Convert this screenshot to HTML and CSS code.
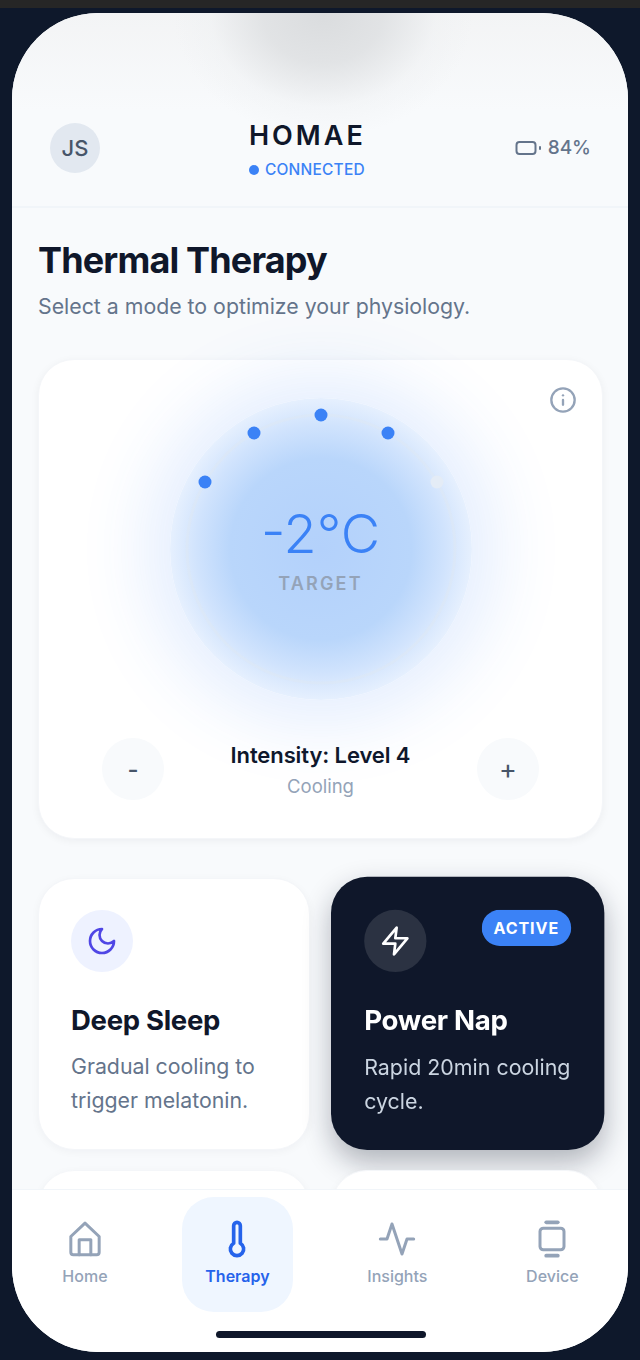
FILE: index.html
```html
<!DOCTYPE html>
<html lang="en">
<head>
  <meta charset="UTF-8" />
  <meta name="viewport" content="width=device-width, initial-scale=1.0" />
  <title>Homae | Thermal Therapy</title>
  <link rel="stylesheet" href="styles.css">
</head>
<body>
  <div class="top-strip"></div>
  <div class="phone">
    <header class="app-header">
      <div class="avatar">JS</div>
      <div class="brand">
        <div class="brand-name">HOMAE</div>
        <div class="brand-status"><span class="status-dot"></span>CONNECTED</div>
      </div>
      <div class="battery">
        <svg class="battery-icon" viewBox="0 0 26 16" fill="none" stroke="currentColor" stroke-width="2" stroke-linecap="round"><rect x="1" y="2" width="19" height="12" rx="3"></rect><path d="M24.5 7v2"></path></svg>
        84%
      </div>
    </header>

    <main class="content">
      <h1>Thermal Therapy</h1>
      <p class="subtitle">Select a mode to optimize your physiology.</p>

      <section class="hero-card">
        <svg class="info-icon" viewBox="0 0 24 24" fill="none" stroke="currentColor" stroke-width="2" stroke-linecap="round"><circle cx="12" cy="12" r="10"></circle><path d="M12 16v-4"></path><path d="M12 8h.01"></path></svg>
        <div class="dial">
          <svg class="dial-marks" viewBox="0 0 302 302">
            <circle class="track" cx="151" cy="151" r="134"></circle>
            <circle class="mark" cx="35" cy="84" r="6.5"></circle>
            <circle class="mark" cx="84" cy="35" r="6.5"></circle>
            <circle class="mark" cx="151" cy="17" r="6.5"></circle>
            <circle class="mark" cx="218" cy="35" r="6.5"></circle>
            <circle class="mark off" cx="267" cy="84" r="6.5"></circle>
          </svg>
          <div class="temp">-2°C</div>
          <div class="temp-label">TARGET</div>
        </div>
        <div class="controls">
          <button class="round-btn">-</button>
          <div class="level">
            <div class="level-name">Intensity: Level 4</div>
            <div class="level-sub">Cooling</div>
          </div>
          <button class="round-btn plus">+</button>
        </div>
      </section>

      <section class="modes">
        <div class="mode-card">
          <div class="mode-icon moon">
            <svg viewBox="0 0 24 24" fill="none" stroke="currentColor" stroke-width="2" stroke-linecap="round" stroke-linejoin="round"><path d="M12 3a6 6 0 0 0 9 9 9 9 0 1 1-9-9Z"></path></svg>
          </div>
          <h2>Deep Sleep</h2>
          <p>Gradual cooling to trigger melatonin.</p>
        </div>
        <div class="mode-card active">
          <span class="badge">ACTIVE</span>
          <div class="mode-icon zap">
            <svg viewBox="0 0 24 24" fill="none" stroke="currentColor" stroke-width="2" stroke-linecap="round" stroke-linejoin="round"><path d="M13 2 3 14h9l-1 8 10-12h-9l1-8z"></path></svg>
          </div>
          <h2>Power Nap</h2>
          <p>Rapid 20min cooling cycle.</p>
        </div>
        <div class="mode-card"></div>
        <div class="mode-card"></div>
      </section>
    </main>

    <nav class="tabbar">
      <div class="tabs">
        <a class="tab">
          <svg viewBox="0 0 24 24" fill="none" stroke="currentColor" stroke-width="1.8" stroke-linecap="round" stroke-linejoin="round"><path d="M3.5 10.5 12 2.5l8.500 8v9.500a1.500 1.500 0 0 1-1.500 1.500H5a1.500 1.500 0 0 1-1.500-1.500z"></path><path d="M8.500 21.500V12.500h7v9"></path></svg>
          Home
        </a>
        <a class="tab current">
          <svg viewBox="0 0 24 24" fill="none" stroke="currentColor" stroke-width="2.2" stroke-linecap="round" stroke-linejoin="round"><path d="M14 4v10.54a4 4 0 1 1-4 0V4a2 2 0 0 1 4 0Z"></path></svg>
          Therapy
        </a>
        <a class="tab">
          <svg viewBox="0 0 24 24" fill="none" stroke="currentColor" stroke-width="1.8" stroke-linecap="round" stroke-linejoin="round"><polyline points="22 12 18 12 15 21 9 3 6 12 2 12"></polyline></svg>
          Insights
        </a>
        <a class="tab">
          <svg viewBox="0 0 24 24" fill="none" stroke="currentColor" stroke-width="1.8" stroke-linecap="round" stroke-linejoin="round"><rect x="4.800" y="5.500" width="14.400" height="13" rx="2"></rect><path d="M8.500 2h7" stroke-width="2.200"></path><path d="M8.500 22h7" stroke-width="2.200"></path></svg>
          Device
        </a>
      </div>
      <div class="home-bar"></div>
    </nav>
  </div>
</body>
</html>
```

FILE: styles.css
```css
:root {
  --navy: #0f172a;
  --blue: #3b82f6;
  --muted: #64748b;
  --soft: #94a3b8;
}

* {
  box-sizing: border-box;
}

html, body {
  margin: 0;
  padding: 0;
  height: 100%;
  background: #0e182b;
  font-family: Inter, "Liberation Sans", sans-serif;
  overflow: hidden;
}

.top-strip {
  height: 8px;
  background: #262626;
}

.phone {
  margin: 5px 12px 0;
  height: 1339px;
  border-radius: 86px;
  background: #f8fafc;
  overflow: hidden;
  display: flex;
  flex-direction: column;
}

/* header */
.app-header {
  height: 195px;
  flex-shrink: 0;
  padding: 0 37px 0 38px;
  display: flex;
  justify-content: space-between;
  align-items: flex-start;
  border-bottom: 2px solid #f1f5f9;
  background:
    radial-gradient(ellipse 150px 125px at 50.500% 0, rgba(218, 220, 222, 1) 0%, rgba(222, 224, 226, 0.85) 40%, rgba(236, 238, 240, 0.35) 75%, rgba(248, 250, 252, 0) 100%),
    linear-gradient(180deg, #f3f4f5 0%, #f8fafc 50%);
}

.avatar {
  width: 50px;
  height: 50px;
  margin-top: 110px;
  border-radius: 50%;
  background: #e2e8f0;
  color: #475569;
  font-size: 22px;
  font-weight: 500;
  display: flex;
  align-items: center;
  justify-content: center;
}

.brand-name {
  margin-top: 106px;
  font-size: 27px;
  line-height: 34px;
  font-weight: 600;
  letter-spacing: 3px;
  color: var(--navy);
}

.brand-status {
  margin-top: 7px;
  font-size: 15.500px;
  line-height: 20px;
  font-weight: 500;
  letter-spacing: 0.2px;
  color: var(--blue);
  display: flex;
  align-items: center;
  gap: 6px;
}

.status-dot {
  width: 10px;
  height: 10px;
  border-radius: 50%;
  background: var(--blue);
}

.battery {
  margin-top: 123px;
  display: flex;
  align-items: center;
  gap: 6px;
  font-size: 19px;
  line-height: 24px;
  font-weight: 500;
  color: var(--muted);
}

.battery-icon {
  width: 27px;
  height: 16px;
}

/* content */
.content {
  flex: 1;
  min-height: 0;
  overflow: hidden;
  padding: 30px 25px 0 26px;
}

h1 {
  margin: 0;
  font-size: 36px;
  line-height: 44px;
  font-weight: 700;
  letter-spacing: -0.850px;
  color: var(--navy);
}

.subtitle {
  margin: 9px 0 0;
  font-size: 21.300px;
  line-height: 30px;
  color: var(--muted);
}

.hero-card {
  position: relative;
  margin-top: 38px;
  height: 480px;
  padding-top: 38px;
  background: #fff;
  border-radius: 36px;
  border: 1px solid #f4f6f9;
  box-shadow: 0 2px 8px rgba(15, 23, 42, 0.05);
}

.info-icon {
  position: absolute;
  top: 26px;
  right: 25px;
  width: 28px;
  height: 28px;
  color: var(--soft);
}

.dial {
  position: relative;
  width: 302px;
  height: 302px;
  margin: 0 auto;
  border-radius: 50%;
  background: radial-gradient(circle closest-side, #b3d1fb 0%, #b9d6fb 60%, #d0e3fd 82%, #e6f0fe 100%);
  box-shadow: 0 0 70px 22px rgba(59, 130, 246, 0.14);
  display: flex;
  flex-direction: column;
  align-items: center;
  padding-top: 104px;
}

.dial-marks {
  position: absolute;
  top: 0;
  left: 0;
  width: 302px;
  height: 302px;
}

.track {
  fill: none;
  stroke: rgba(226, 232, 240, 0.3);
  stroke-width: 3;
}

.mark {
  fill: var(--blue);
}

.mark.off {
  fill: #e4ecf6;
}

.temp {
  position: relative;
  font-size: 54px;
  line-height: 64px;
  font-weight: 300;
  color: var(--blue);
}

.temp-label {
  position: relative;
  margin-top: 7px;
  font-size: 18px;
  line-height: 22px;
  font-weight: 600;
  letter-spacing: 2.200px;
  color: var(--soft);
}

.controls {
  margin-top: 38px;
  padding: 0 63px;
  display: flex;
  justify-content: space-between;
  align-items: center;
}

.round-btn {
  width: 62px;
  height: 62px;
  padding: 0;
  border: none;
  border-radius: 50%;
  background: #f8fafc;
  color: #475569;
  font-family: inherit;
  font-size: 24px;
  font-weight: 500;
}

.round-btn.plus {
  font-size: 27px;
  font-weight: 400;
}

.level {
  text-align: center;
}

.level-name {
  font-size: 22px;
  line-height: 28px;
  font-weight: 600;
  letter-spacing: -0.100px;
  color: var(--navy);
}

.level-sub {
  margin-top: 5px;
  font-size: 18.500px;
  line-height: 24px;
  color: var(--soft);
}

/* mode cards */
.modes {
  margin-top: 39px;
  display: grid;
  grid-template-columns: 272px 272px;
  gap: 20px 21px;
}

.mode-card {
  position: relative;
  height: 272px;
  padding: 31px 32px;
  background: #fff;
  border-radius: 36px;
  border: 1px solid #f4f6f9;
  box-shadow: 0 2px 8px rgba(15, 23, 42, 0.04);
}

.mode-card h2 {
  margin: 30px 0 0;
  font-size: 27.500px;
  line-height: 36px;
  font-weight: 700;
  letter-spacing: -0.300px;
  color: var(--navy);
}

.mode-card p {
  margin: 11px 0 0;
  font-size: 21.300px;
  line-height: 34px;
  color: var(--muted);
}

.mode-card.active {
  background: #0f172a;
  border: none;
  padding: 33px;
  transform: scale(1.005);
  transform-origin: left bottom;
  box-shadow: 0 12px 28px rgba(15, 23, 42, 0.3);
}

.mode-card.active h2 {
  color: #fff;
}

.mode-card.active p {
  color: #cbd5e1;
}

.mode-icon {
  width: 62px;
  height: 62px;
  border-radius: 50%;
  display: flex;
  align-items: center;
  justify-content: center;
}

.mode-icon svg {
  width: 32px;
  height: 32px;
}

.mode-icon.moon {
  background: #eef2ff;
  color: #4f46e5;
}

.mode-icon.zap {
  background: #2b3242;
  color: #fff;
}

.badge {
  position: absolute;
  top: 33px;
  right: 33px;
  height: 36px;
  padding: 0 12px;
  border-radius: 18px;
  background: var(--blue);
  color: #fff;
  font-size: 16px;
  line-height: 36px;
  font-weight: 700;
  letter-spacing: 0.900px;
}

/* bottom nav */
.tabbar {
  flex-shrink: 0;
  height: 163px;
  padding-top: 7px;
  background: #fff;
  border-top: 1px solid #f1f5f9;
}

.tabs {
  display: flex;
  justify-content: space-around;
  padding-left: 1px;
}

.tab {
  height: 115px;
  padding: 22px 24px 0;
  border-radius: 32px;
  display: flex;
  flex-direction: column;
  align-items: center;
  gap: 7px;
  color: var(--soft);
  font-size: 16px;
  line-height: 20px;
  font-weight: 500;
}

.tab svg {
  width: 40px;
  height: 40px;
}

.tab.current {
  padding: 22px 23px 0;
  background: #eff6ff;
  color: #2563eb;
  font-weight: 600;
}

.home-bar {
  width: 210px;
  height: 7px;
  margin: 19px 0 0 204px;
  border-radius: 4px;
  background: var(--navy);
}
```
